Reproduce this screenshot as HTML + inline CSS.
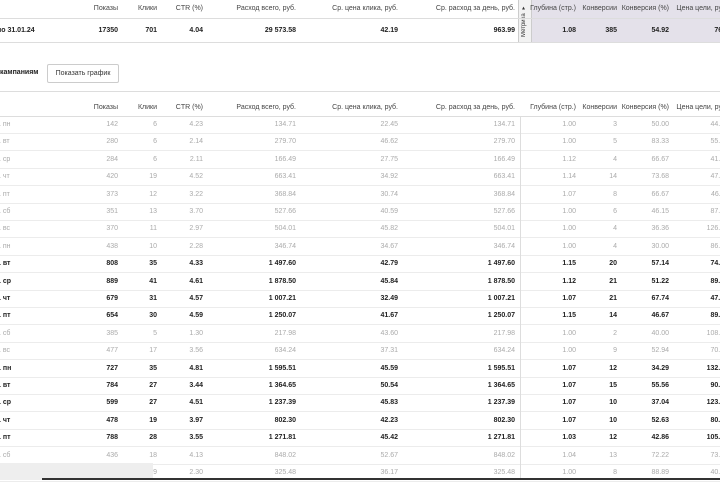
<!DOCTYPE html>
<html><head><meta charset="utf-8"><style>
body{margin:0;width:720px;height:480px;overflow:hidden;background:#fff;font-family:"Liberation Sans",sans-serif;font-size:7px;color:#333;position:relative}
.r{position:absolute;left:0;width:740px;height:17px;border-bottom:1px solid #ececec}
.r span{position:absolute;top:5px;width:90px;text-align:right;white-space:nowrap}
.r span.l{text-align:left;left:-3px;width:60px}
.c1{left:28px}.c2{left:67px}.c3{left:113px}.c4{left:206px}.c5{left:308px}.c6{left:425px}.c7{left:486px}.c8{left:527px}.c9{left:579px}.c10{left:638px}
.g{color:#aaa}.b{color:#222;font-weight:bold}
.h span{color:#444}
</style></head><body>
<div style="position:absolute;left:530px;top:0;width:190px;height:42px;background:#e4e1ea"></div>
<div style="position:absolute;left:518px;top:0;width:12px;height:42px;background:#f2f2f2;border-left:1px solid #ccc;border-right:1px solid #ccc;overflow:hidden"></div>
<div style="position:absolute;left:519px;top:2px;width:11px;height:38px;writing-mode:vertical-rl;transform:rotate(180deg);font-size:6px;line-height:11px;text-align:center;color:#333;overflow:hidden;white-space:nowrap">Метрика ▾</div>
<div class="r h" style="top:0;height:18px;border-bottom:1px solid #ddd"><span class="c1">Показы</span><span class="c2">Клики</span><span class="c3">CTR (%)</span><span class="c4">Расход всего, руб.</span><span class="c5">Ср. цена клика, руб.</span><span class="c6">Ср. расход за день, руб.</span><span class="c7">Глубина (стр.)</span><span class="c8">Конверсии</span><span class="c9">Конверсия (%)</span><span class="c10">Цена цели, руб.</span></div>
<div class="r b" style="top:19px;height:23px;border-bottom:1px solid #ddd"><span class="l" style="top:8px">по 31.01.24</span><span class="c1" style="top:8px">17350</span><span class="c2" style="top:8px">701</span><span class="c3" style="top:8px">4.04</span><span class="c4" style="top:8px">29 573.58</span><span class="c5" style="top:8px">42.19</span><span class="c6" style="top:8px">963.99</span><span class="c7" style="top:8px">1.08</span><span class="c8" style="top:8px">385</span><span class="c9" style="top:8px">54.92</span><span class="c10" style="top:8px">76.0</span></div>
<div style="position:absolute;left:0;top:69px;font-weight:bold;color:#222">кампаниям</div>
<div style="position:absolute;left:47px;top:64px;width:70px;height:17px;border:1px solid #ccc;border-radius:2px;text-align:center;line-height:17px;color:#333;background:#fff">Показать график</div>
<div style="position:absolute;left:0;top:91px;width:720px;border-top:1px solid #ddd"></div>
<div class="r h" style="top:99px;height:17px;border-bottom:1px solid #ddd"><span class="c1">Показы</span><span class="c2">Клики</span><span class="c3">CTR (%)</span><span class="c4">Расход всего, руб.</span><span class="c5">Ср. цена клика, руб.</span><span class="c6">Ср. расход за день, руб.</span><span class="c7">Глубина (стр.)</span><span class="c8">Конверсии</span><span class="c9">Конверсия (%)</span><span class="c10">Цена цели, руб.</span></div>
<div style="position:absolute;left:520px;top:117px;height:363px;border-left:1px solid #ddd;z-index:2"></div>
<div class="r g" style="top:116px"><span class="l">1 пн</span><span class="c1">142</span><span class="c2">6</span><span class="c3">4.23</span><span class="c4">134.71</span><span class="c5">22.45</span><span class="c6">134.71</span><span class="c7">1.00</span><span class="c8">3</span><span class="c9">50.00</span><span class="c10">44.90</span></div>
<div class="r g" style="top:133.4px"><span class="l">1 вт</span><span class="c1">280</span><span class="c2">6</span><span class="c3">2.14</span><span class="c4">279.70</span><span class="c5">46.62</span><span class="c6">279.70</span><span class="c7">1.00</span><span class="c8">5</span><span class="c9">83.33</span><span class="c10">55.94</span></div>
<div class="r g" style="top:150.8px"><span class="l">1 ср</span><span class="c1">284</span><span class="c2">6</span><span class="c3">2.11</span><span class="c4">166.49</span><span class="c5">27.75</span><span class="c6">166.49</span><span class="c7">1.12</span><span class="c8">4</span><span class="c9">66.67</span><span class="c10">41.62</span></div>
<div class="r g" style="top:168.2px"><span class="l">1 чт</span><span class="c1">420</span><span class="c2">19</span><span class="c3">4.52</span><span class="c4">663.41</span><span class="c5">34.92</span><span class="c6">663.41</span><span class="c7">1.14</span><span class="c8">14</span><span class="c9">73.68</span><span class="c10">47.39</span></div>
<div class="r g" style="top:185.6px"><span class="l">1 пт</span><span class="c1">373</span><span class="c2">12</span><span class="c3">3.22</span><span class="c4">368.84</span><span class="c5">30.74</span><span class="c6">368.84</span><span class="c7">1.07</span><span class="c8">8</span><span class="c9">66.67</span><span class="c10">46.11</span></div>
<div class="r g" style="top:203px"><span class="l">1 сб</span><span class="c1">351</span><span class="c2">13</span><span class="c3">3.70</span><span class="c4">527.66</span><span class="c5">40.59</span><span class="c6">527.66</span><span class="c7">1.00</span><span class="c8">6</span><span class="c9">46.15</span><span class="c10">87.94</span></div>
<div class="r g" style="top:220.4px"><span class="l">1 вс</span><span class="c1">370</span><span class="c2">11</span><span class="c3">2.97</span><span class="c4">504.01</span><span class="c5">45.82</span><span class="c6">504.01</span><span class="c7">1.00</span><span class="c8">4</span><span class="c9">36.36</span><span class="c10">126.00</span></div>
<div class="r g" style="top:237.8px"><span class="l">1 пн</span><span class="c1">438</span><span class="c2">10</span><span class="c3">2.28</span><span class="c4">346.74</span><span class="c5">34.67</span><span class="c6">346.74</span><span class="c7">1.00</span><span class="c8">4</span><span class="c9">30.00</span><span class="c10">86.69</span></div>
<div class="r b" style="top:255.2px"><span class="l">1 вт</span><span class="c1">808</span><span class="c2">35</span><span class="c3">4.33</span><span class="c4">1 497.60</span><span class="c5">42.79</span><span class="c6">1 497.60</span><span class="c7">1.15</span><span class="c8">20</span><span class="c9">57.14</span><span class="c10">74.88</span></div>
<div class="r b" style="top:272.6px"><span class="l">1 ср</span><span class="c1">889</span><span class="c2">41</span><span class="c3">4.61</span><span class="c4">1 878.50</span><span class="c5">45.84</span><span class="c6">1 878.50</span><span class="c7">1.12</span><span class="c8">21</span><span class="c9">51.22</span><span class="c10">89.45</span></div>
<div class="r b" style="top:290px"><span class="l">1 чт</span><span class="c1">679</span><span class="c2">31</span><span class="c3">4.57</span><span class="c4">1 007.21</span><span class="c5">32.49</span><span class="c6">1 007.21</span><span class="c7">1.07</span><span class="c8">21</span><span class="c9">67.74</span><span class="c10">47.96</span></div>
<div class="r b" style="top:307.4px"><span class="l">1 пт</span><span class="c1">654</span><span class="c2">30</span><span class="c3">4.59</span><span class="c4">1 250.07</span><span class="c5">41.67</span><span class="c6">1 250.07</span><span class="c7">1.15</span><span class="c8">14</span><span class="c9">46.67</span><span class="c10">89.29</span></div>
<div class="r g" style="top:324.8px"><span class="l">1 сб</span><span class="c1">385</span><span class="c2">5</span><span class="c3">1.30</span><span class="c4">217.98</span><span class="c5">43.60</span><span class="c6">217.98</span><span class="c7">1.00</span><span class="c8">2</span><span class="c9">40.00</span><span class="c10">108.99</span></div>
<div class="r g" style="top:342.2px"><span class="l">1 вс</span><span class="c1">477</span><span class="c2">17</span><span class="c3">3.56</span><span class="c4">634.24</span><span class="c5">37.31</span><span class="c6">634.24</span><span class="c7">1.00</span><span class="c8">9</span><span class="c9">52.94</span><span class="c10">70.47</span></div>
<div class="r b" style="top:359.6px"><span class="l">1 пн</span><span class="c1">727</span><span class="c2">35</span><span class="c3">4.81</span><span class="c4">1 595.51</span><span class="c5">45.59</span><span class="c6">1 595.51</span><span class="c7">1.07</span><span class="c8">12</span><span class="c9">34.29</span><span class="c10">132.96</span></div>
<div class="r b" style="top:377px"><span class="l">1 вт</span><span class="c1">784</span><span class="c2">27</span><span class="c3">3.44</span><span class="c4">1 364.65</span><span class="c5">50.54</span><span class="c6">1 364.65</span><span class="c7">1.07</span><span class="c8">15</span><span class="c9">55.56</span><span class="c10">90.98</span></div>
<div class="r b" style="top:394.4px"><span class="l">1 ср</span><span class="c1">599</span><span class="c2">27</span><span class="c3">4.51</span><span class="c4">1 237.39</span><span class="c5">45.83</span><span class="c6">1 237.39</span><span class="c7">1.07</span><span class="c8">10</span><span class="c9">37.04</span><span class="c10">123.74</span></div>
<div class="r b" style="top:411.8px"><span class="l">1 чт</span><span class="c1">478</span><span class="c2">19</span><span class="c3">3.97</span><span class="c4">802.30</span><span class="c5">42.23</span><span class="c6">802.30</span><span class="c7">1.07</span><span class="c8">10</span><span class="c9">52.63</span><span class="c10">80.23</span></div>
<div class="r b" style="top:429.2px"><span class="l">1 пт</span><span class="c1">788</span><span class="c2">28</span><span class="c3">3.55</span><span class="c4">1 271.81</span><span class="c5">45.42</span><span class="c6">1 271.81</span><span class="c7">1.03</span><span class="c8">12</span><span class="c9">42.86</span><span class="c10">105.98</span></div>
<div class="r g" style="top:446.6px"><span class="l">1 сб</span><span class="c1">436</span><span class="c2">18</span><span class="c3">4.13</span><span class="c4">848.02</span><span class="c5">52.67</span><span class="c6">848.02</span><span class="c7">1.04</span><span class="c8">13</span><span class="c9">72.22</span><span class="c10">73.00</span></div>
<div class="r g" style="top:464px"><span class="l"></span><span class="c1">355</span><span class="c2">9</span><span class="c3">2.30</span><span class="c4">325.48</span><span class="c5">36.17</span><span class="c6">325.48</span><span class="c7">1.00</span><span class="c8">8</span><span class="c9">88.89</span><span class="c10">40.69</span></div>
<div style="position:absolute;left:0;top:463px;width:153px;height:17px;background:#eeeeee;z-index:3"></div>
<div style="position:absolute;left:42px;top:478px;width:678px;height:2px;background:#333;z-index:4"></div>
</body></html>
